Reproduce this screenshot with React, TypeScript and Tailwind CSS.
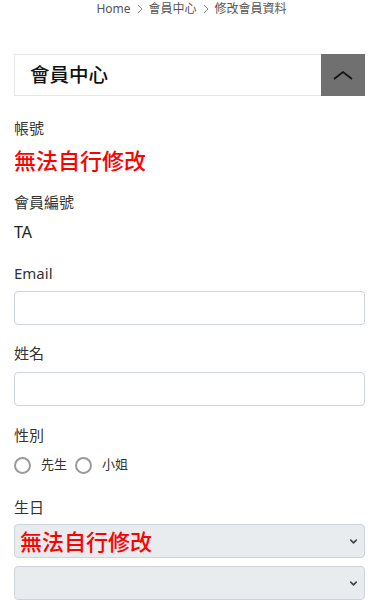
import { ChevronDown } from "lucide-react";

const CJK = "font-['Segoe_UI','Noto_Sans','Noto_Sans_CJK_TC',sans-serif]";

function Label({ children }: { children: React.ReactNode }) {
  return <div className="text-[15px] leading-[22px] text-[#333]">{children}</div>;
}

function TextInput() {
  return <div className="h-[34px] rounded-[4px] border border-[#ced4da] bg-white" />;
}

function Radio({ label }: { label: string }) {
  return (
    <label className="flex items-center">
      <span className="w-[17px] h-[17px] rounded-full border-2 border-[#9a9a9a] bg-white" />
      <span className="ml-[10px] text-[13px] text-[#333]">{label}</span>
    </label>
  );
}

function Select({ children }: { children?: React.ReactNode }) {
  return (
    <div className="h-[34px] rounded-[4px] border border-[#ced4da] bg-[#e9ecef] flex items-center pl-[5px] pr-[5px]">
      <div className="flex-1 min-w-0">{children}</div>
      <ChevronDown size={11} strokeWidth={3.5} className="text-[#444]" />
    </div>
  );
}

function Sep() {
  return (
    <svg width="6" height="10" viewBox="0 0 6 10" fill="none" className="mx-[6px]">
      <path d="M1 1 L5 5 L1 9" stroke="#888" strokeWidth="1" />
    </svg>
  );
}

export default function App() {
  return (
    <div className={`${CJK} bg-white min-h-[600px] pl-[14px] pr-[10px] overflow-hidden`}>
      {/* breadcrumb */}
      <div className="flex items-center justify-center h-[18px] text-[12px] text-[#555] pl-[4px]">
        <span>Home</span>
        <Sep />
        <span>會員中心</span>
        <Sep />
        <span>修改會員資料</span>
      </div>

      {/* header */}
      <div className="mt-[36px] flex h-[42px] border border-[#e6e6e6]">
        <div className="flex-1 flex items-center pl-[15px] text-[19.5px] font-medium text-[#111]">會員中心</div>
        <button className="w-[44px] -my-px -mr-px bg-[#707070] flex items-center justify-center">
          <svg width="20" height="10" viewBox="0 0 20 10" fill="none">
            <path d="M1 9 L10 2 L19 9" stroke="#111" strokeWidth="1.6" />
          </svg>
        </button>
      </div>

      <div className="mt-[21px]">
        <Label>帳號</Label>
        <div className="mt-[7px] text-[22px] leading-[28px] font-medium text-[#ff0000]">無法自行修改</div>
      </div>

      <div className="mt-[17px]">
        <Label>會員編號</Label>
        <div className="mt-[8px] text-[16px] leading-[22px] text-[#222]">TA</div>
      </div>

      <div className="mt-[19px]">
        <Label>Email</Label>
        <div className="mt-[7px]">
          <TextInput />
        </div>
      </div>

      <div className="mt-[17px]">
        <Label>姓名</Label>
        <div className="mt-[8px]">
          <TextInput />
        </div>
      </div>

      <div className="mt-[18px]">
        <Label>性別</Label>
        <div className="mt-[8px] flex items-center gap-[8px] h-[22px]">
          <Radio label="先生" />
          <Radio label="小姐" />
        </div>
      </div>

      <div className="mt-[20px]">
        <Label>生日</Label>
        <div className="mt-[6px]">
          <Select>
            <span className="text-[22px] leading-[28px] font-medium text-[#ff0000]">無法自行修改</span>
          </Select>
        </div>
        <div className="mt-[8px]">
          <Select />
        </div>
      </div>
    </div>
  );
}
